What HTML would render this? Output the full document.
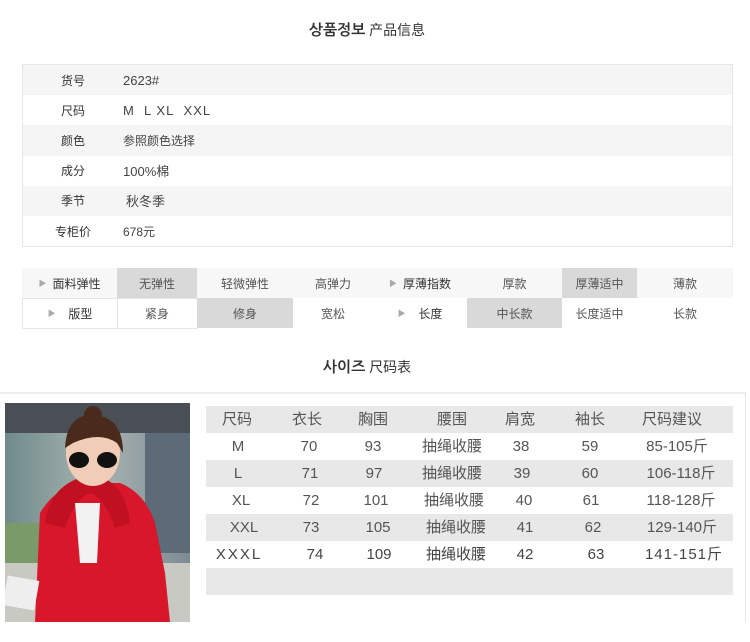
<!DOCTYPE html>
<html><head><meta charset="utf-8"><style>
*{margin:0;padding:0;box-sizing:border-box}
body{width:750px;height:642px;background:#fff;font-family:"Liberation Sans","Noto Sans CJK SC",sans-serif;position:relative;overflow:hidden;color:#333}
.abs{position:absolute}
.title{position:absolute;left:-8px;width:750px;text-align:center;font-size:14px;color:#333}
.title b{font-family:"NanumGothic","Noto Sans CJK KR",sans-serif;font-weight:bold;font-size:15px}
.info{position:absolute;left:22px;top:64px;width:711px;height:183px;border:1px solid #e6e6e6}
.info div{height:30.2px;display:flex;align-items:center;font-size:12px}
.info div:nth-child(odd){background:#f5f5f5}
.info span.l{width:100px;text-align:center;color:#333}
.info span.v{color:#444}
.cell{position:absolute;height:30px;display:flex;align-items:center;justify-content:center;font-size:12px;color:#555}
.g{background:#d9d9d9}
.tri{font-size:8px;color:#aaa;margin-right:6px}
.st{position:absolute;left:206px;width:527px;height:27px;font-size:15px;color:#555}
.st span{position:absolute;top:0;line-height:27px;height:27px;transform:translateX(-50%);white-space:nowrap}
</style></head><body>
<div class="title" style="top:20px"><b>상품정보</b> 产品信息</div>
<div class="info">
<div><span class="l">货号</span><span class="v" style="font-size:13px">2623#</span></div>
<div><span class="l">尺码</span><span class="v" style="letter-spacing:1px;font-size:13px">M&nbsp; L XL&nbsp; XXL</span></div>
<div><span class="l">颜色</span><span class="v">参照颜色选择</span></div>
<div><span class="l">成分</span><span class="v" style="font-size:13px">100%棉</span></div>
<div><span class="l">季节</span><span class="v" style="font-size:13px;margin-left:3px">秋冬季</span></div>
<div><span class="l">专柜价</span><span class="v">678元</span></div>
</div>
<div class="abs" style="left:22px;top:268px;width:711px;height:30px;background:#f7f7f7"></div>
<div class="cell" style="left:22px;top:268px;width:95px;color:#333"><span class="tri">▶</span>面料弹性</div>
<div class="cell g" style="left:117px;top:268px;width:80px">无弹性</div>
<div class="cell" style="left:197px;top:268px;width:96px">轻微弹性</div>
<div class="cell" style="left:293px;top:268px;width:80px">高弹力</div>
<div class="cell" style="left:373px;top:268px;width:94px;color:#333"><span class="tri">▶</span>厚薄指数</div>
<div class="cell" style="left:467px;top:268px;width:95px">厚款</div>
<div class="cell g" style="left:562px;top:268px;width:75px">厚薄适中</div>
<div class="cell" style="left:637px;top:268px;width:96px">薄款</div>
<div class="cell" style="left:22px;top:298px;width:96px;height:31px;border:1px solid #e6e6e6;color:#333"><span class="tri">▶</span>&nbsp;&nbsp;版型</div>
<div class="cell" style="left:117px;top:298px;width:81px;height:31px;border:1px solid #e6e6e6;border-left:none">紧身</div>
<div class="cell g" style="left:197px;top:298px;width:96px">修身</div>
<div class="cell" style="left:293px;top:298px;width:80px">宽松</div>
<div class="cell" style="left:373px;top:298px;width:94px;color:#333"><span class="tri">▶</span>&nbsp;&nbsp;长度</div>
<div class="cell g" style="left:467px;top:298px;width:95px">中长款</div>
<div class="cell" style="left:562px;top:298px;width:75px">长度适中</div>
<div class="cell" style="left:637px;top:298px;width:96px">长款</div>
<div class="title" style="top:357px"><b>사이즈</b> 尺码表</div>
<div class="abs" style="left:0;top:392px;width:746px;height:2px;background:#eee"></div>
<div class="abs" style="left:745px;top:393px;width:1px;height:229px;background:#e6e6e6"></div>
<svg class="abs" style="left:5px;top:403px" width="185" height="219" viewBox="0 0 185 219">
<defs><linearGradient id="bg" x1="0" x2="1"><stop offset="0" stop-color="#6f8a8a"/><stop offset="0.5" stop-color="#a9b5b3"/><stop offset="1" stop-color="#7c8a92"/></linearGradient></defs>
<rect width="185" height="219" fill="url(#bg)"/>
<rect x="0" y="0" width="185" height="30" fill="#4a4f55"/>
<rect x="140" y="30" width="45" height="120" fill="#5d6a78"/>
<rect x="0" y="120" width="40" height="40" fill="#7a9a6a"/>
<rect x="0" y="160" width="185" height="59" fill="#c9c9c4"/>
<path d="M30 219 L35 110 Q50 85 75 80 L115 80 Q140 90 150 120 L160 170 L165 219 Z" fill="#d8172a"/>
<path d="M40 120 Q45 80 85 72 Q120 75 125 120 L110 125 Q100 95 85 90 Q70 95 60 125 Z" fill="#c01022"/>
<path d="M70 100 L95 100 L92 160 L75 160 Z" fill="#f2f2f2"/>
<ellipse cx="88" cy="50" rx="27" ry="33" fill="#f1cdb8"/>
<path d="M60 45 Q62 10 90 12 Q118 15 118 50 L112 40 Q95 28 68 40 Z" fill="#4a2a1c"/>
<circle cx="88" cy="12" r="9" fill="#4a2a1c"/>
<ellipse cx="74" cy="57" rx="10" ry="8" fill="#111"/><ellipse cx="102" cy="57" rx="10" ry="8" fill="#111"/>
<rect x="0" y="175" width="32" height="30" fill="#eee" transform="rotate(10 16 190)"/>
</svg>
<div class="st" style="top:406px;background:#e8e8e8"><span style="left:31px">尺码</span><span style="left:101px">衣长</span><span style="left:167px">胸围</span><span style="left:246px">腰围</span><span style="left:314px">肩宽</span><span style="left:384px">袖长</span><span style="left:466px">尺码建议</span></div>
<div class="st" style="top:433px"><span style="left:32px">M</span><span style="left:103px">70</span><span style="left:167px">93</span><span style="left:246px">抽绳收腰</span><span style="left:315px">38</span><span style="left:384px">59</span><span style="left:471px">85-105斤</span></div>
<div class="st" style="top:460px;background:#e8e8e8"><span style="left:32px">L</span><span style="left:104px">71</span><span style="left:168px">97</span><span style="left:246px">抽绳收腰</span><span style="left:316px">39</span><span style="left:384px">60</span><span style="left:475px">106-118斤</span></div>
<div class="st" style="top:487px"><span style="left:35px">XL</span><span style="left:105px">72</span><span style="left:170px">101</span><span style="left:248px">抽绳收腰</span><span style="left:318px">40</span><span style="left:385px">61</span><span style="left:475px">118-128斤</span></div>
<div class="st" style="top:514px;background:#e8e8e8"><span style="left:38px">XXL</span><span style="left:105px">73</span><span style="left:172px">105</span><span style="left:250px">抽绳收腰</span><span style="left:319px">41</span><span style="left:387px">62</span><span style="left:476px">129-140斤</span></div>
<div class="st" style="top:541px;color:#444"><span style="left:33px;letter-spacing:2px">XXXL</span><span style="left:109px">74</span><span style="left:173px">109</span><span style="left:250px">抽绳收腰</span><span style="left:319px">42</span><span style="left:390px">63</span><span style="left:478px;letter-spacing:1px">141-151斤</span></div>
<div class="st" style="top:568px;background:#e8e8e8"></div>
</body></html>
